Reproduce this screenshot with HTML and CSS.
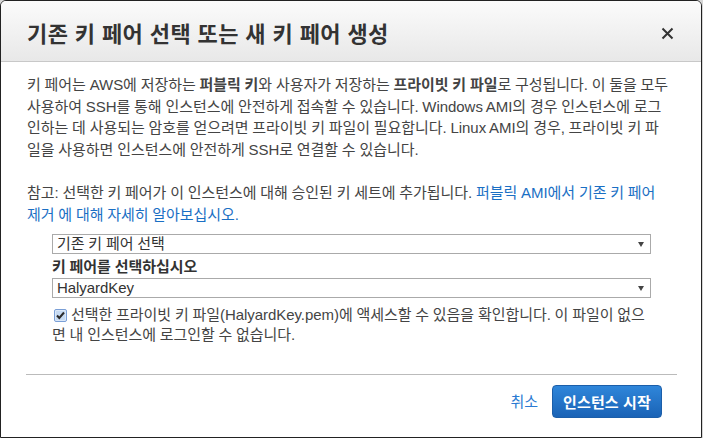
FILE: index.html
```html
<!DOCTYPE html>
<html lang="ko">
  <head>
    <meta charset="UTF-8" />
    <meta name="viewport" content="width=device-width, initial-scale=1.0" />
    <title>키 페어 선택</title>
    <link rel="stylesheet" href="styles.css">
  </head>
  <body>
    <div class="modal">
      <div class="modal-header">
        <h2>기존 키 페어 선택 또는 새 키 페어 생성</h2>
        <span class="close">
          <svg width="13" height="13" viewBox="0 0 13 13">
            <path d="M1.5 1.5 L11.5 11.5 M11.5 1.5 L1.5 11.5" stroke="#333" stroke-width="2" fill="none" />
          </svg>
        </span>
      </div>

      <div class="modal-body">
        <p class="intro">
          키 페어는 AWS에 저장하는 <b>퍼블릭 키</b>와 사용자가 저장하는 <b>프라이빗 키 파일</b>로 구성됩니다. 이 둘을 모두 사용하여 SSH를 통해 인스턴스에 안전하게 접속할 수 있습니다. Windows AMI의 경우 인스턴스에 로그인하는 데 사용되는 암호를 얻으려면 프라이빗 키 파일이 필요합니다. Linux AMI의 경우, 프라이빗 키 파일을 사용하면 인스턴스에 안전하게 SSH로 연결할 수 있습니다.
        </p>
        <p class="intro">
          참고: 선택한 키 페어가 이 인스턴스에 대해 승인된 키 세트에 추가됩니다. <a href="#">퍼블릭 AMI에서 기존 키 페어 제거 에 대해 자세히 알아보십시오.</a>
        </p>

        <div class="key-form">
          <div class="select">기존 키 페어 선택</div>
          <div class="field-label">키 페어를 선택하십시오</div>
          <div class="select">HalyardKey</div>
          <p class="ack">
            <span class="checkbox">
              <svg width="13" height="13" viewBox="0 0 13 13">
                <rect x="0.5" y="0.5" width="12" height="12" rx="1.5" fill="#dbe8f8" stroke="#7a9fd6" />
                <rect x="2" y="2" width="9" height="9" fill="#c6daf2" />
                <path d="M3 6.5 L5.3 9 L10 3.5" stroke="#2b2b2b" stroke-width="2" fill="none" />
              </svg>
            </span>선택한 프라이빗 키 파일(HalyardKey.pem)에 액세스할 수 있음을 확인합니다. 이 파일이 없으면 내 인스턴스에 로그인할 수 없습니다.
          </p>
        </div>
      </div>

      <div class="modal-footer">
        <a href="#" class="cancel">취소</a>
        <button class="btn-primary">인스턴스 시작</button>
      </div>
    </div>
  </body>
</html>
```

FILE: styles.css
```css
body {
  margin: 0;
  background: #d6d6d6;
  font-family: "Liberation Sans", "Noto Sans CJK KR", sans-serif;
  font-size: 15px;
  letter-spacing: -0.05px;
  word-spacing: -0.3px;
  color: #444;
}
.modal {
  width: 700px;
  height: 436px;
  background: white;
  border: 1px solid #222;
  border-radius: 6px 6px 0 0;
  overflow: hidden;
  display: flex;
  flex-direction: column;
}
.modal-header {
  height: 60px;
  flex: none;
  border-bottom: 1px solid #c8c8c8;
  background: linear-gradient(#fbfbfb, #e8e8e8);
  display: flex;
  align-items: center;
  justify-content: space-between;
  padding: 0 27px 0 26px;
}
.modal-header h2 {
  margin: 2px 0 0;
  font-size: 22px;
  letter-spacing: 0.4px;
  word-spacing: 0;
  font-weight: 700;
  color: #333;
}
.close {
  display: flex;
  margin-top: 4px;
}
.modal-body {
  padding: 12px 29px 0 26px;
}
.intro {
  margin: 0 0 22px;
  line-height: 21.5px;
}
.intro a {
  color: #1a6fc4;
  text-decoration: none;
}
.key-form {
  margin-top: -13px;
  padding: 0 21px 0 25px;
}
.select {
  position: relative;
  height: 18px;
  line-height: 18px;
  border: 1px solid #aaa;
  padding-left: 4px;
  color: #333;
}
.select::after {
  content: "";
  position: absolute;
  right: 6px;
  top: 7px;
  border-left: 3px solid transparent;
  border-right: 3px solid transparent;
  border-top: 5px solid #444;
}
.field-label {
  margin-top: 2px;
  line-height: 22px;
  font-weight: 700;
  color: #333;
}
.ack {
  margin: 7px 0 0;
  line-height: 20px;
}
.checkbox {
  display: inline-block;
  vertical-align: -2px;
  margin: 0 4px 0 2px;
  width: 13px;
  height: 13px;
}
.checkbox svg {
  display: block;
}
.modal-footer {
  margin: auto 24px 0 25px;
  border-top: 1px solid #bbb;
  height: 63px;
  padding: 10px 15px 0 0;
  box-sizing: border-box;
  display: flex;
  align-items: flex-start;
  justify-content: flex-end;
  gap: 14px;
}
.cancel {
  color: #2a7ad2;
  text-decoration: none;
  line-height: 33px;
}
.btn-primary {
  height: 33px;
  width: 110px;
  border: 1px solid #1b5ea9;
  border-radius: 4px;
  background: linear-gradient(#2f86da, #1a63b6);
  color: white;
  font-family: inherit;
  font-size: 15px;
  letter-spacing: 0.15px;
  font-weight: 700;
  padding: 0;
}
```
